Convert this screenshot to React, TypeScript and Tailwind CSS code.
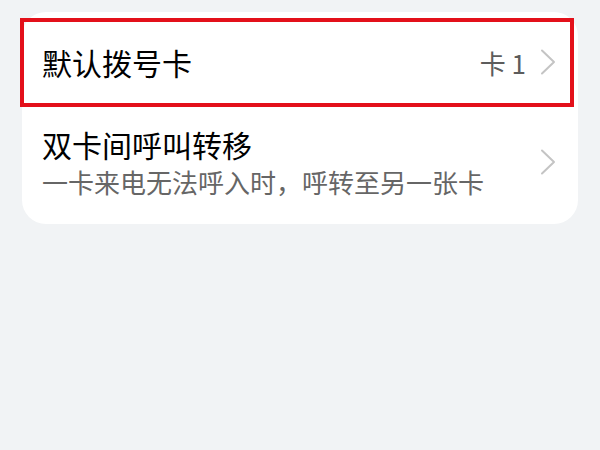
import React from 'react';

const Chevron: React.FC = () => (
  <svg width="16" height="26" viewBox="0 0 16 26" fill="none" className="shrink-0">
    <path d="M2 1.5 L14 13 L2 24.5" stroke="#c4c4c4" strokeWidth="2" strokeLinecap="round" strokeLinejoin="round" />
  </svg>
);

const App: React.FC = () => {
  return (
    <div
      className="relative w-[600px] h-[450px] bg-[#f1f3f5] pt-3 overflow-hidden"
      style={{ fontFamily: '"Noto Sans CJK SC", "Noto Sans", sans-serif' }}
    >
      <div className="mx-[22px] bg-white rounded-[24px] overflow-hidden">
        {/* default dial card */}
        <div className="flex items-center h-[100px] pl-[20px] pr-[22px]">
          <div className="flex-1 text-[30px] leading-none font-normal text-black">默认拨号卡</div>
          <div className="text-[26px] leading-none text-[#5c5c5c] mr-[14px] mt-[2px]">卡 1</div>
          <Chevron />
        </div>
        {/* call forwarding between cards */}
        <div className="flex items-center pl-[20px] pr-[22px] pt-[12px] pb-[24px]">
          <div className="flex-1">
            <div className="text-[30px] leading-[40px] font-normal text-black">双卡间呼叫转移</div>
            <div className="text-[26px] leading-[36px] text-[#666666]">一卡来电无法呼入时，呼转至另一张卡</div>
          </div>
          <Chevron />
        </div>
      </div>
      <div className="absolute left-[20px] top-[18px] w-[554px] h-[89px] border-[4px] border-[#e3101a] pointer-events-none" />
    </div>
  );
};

export default App;
